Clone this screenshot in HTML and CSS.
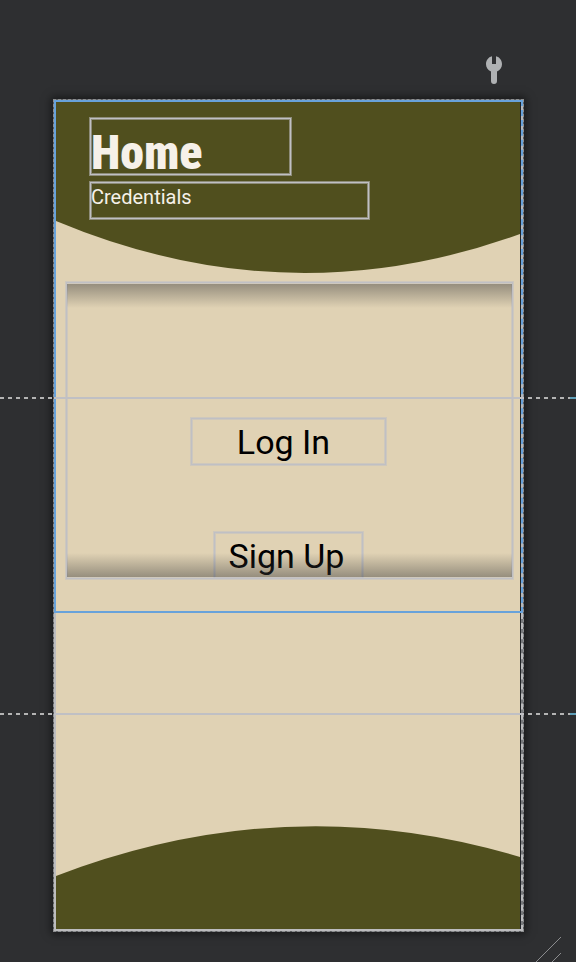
FILE: index.html
```html
<!DOCTYPE html>
<html lang="en">
<head>
<meta charset="utf-8">
<meta name="viewport" content="width=device-width, initial-scale=1">
<title>Home</title>
<link rel="stylesheet" href="styles.css">
</head>
<body>
<div class="toolbar">
  <button class="tool" type="button" aria-label="Design tools">
    <svg width="18" height="28" viewBox="0 0 18 28"><path fill="#afb1b3" d="M7 .2V8h4V.2C14.800 1 17 4.400 17 8.200c0 3.200-1.800 5.800-5 7.200v9.600a3 3 0 0 1-6 0v-9.600C2.800 14 1 11.400 1 8.200 1 4.400 3.200 1 7 .2z"/></svg>
  </button>
</div>
<main class="device">
  <section class="pane selected">
    <div class="screen">
      <header class="hero">
        <svg class="curve" viewBox="0 0 464 171" preserveAspectRatio="none"><path fill="#504f1e" d="M0 0H464V132Q232 216 0 119Z"/></svg>
        <h1 class="frame title">Home</h1>
        <p class="frame subtitle">Credentials</p>
      </header>
      <div class="frame panel">
        <button class="frame action login" type="button">Log In</button>
        <button class="frame action signup" type="button">Sign Up</button>
      </div>
    </div>
  </section>
  <section class="pane rest">
    <div class="screen bottom">
      <svg class="wave" viewBox="0 0 464 103" preserveAspectRatio="none"><path fill="#504f1e" d="M0 103V50Q232 -39 464 31V103Z"/></svg>
    </div>
  </section>
</main>
<div class="guide guide-upper"></div>
<div class="guide guide-lower"></div>
<svg class="grip" width="26" height="26" viewBox="0 0 26 26"><path d="M0 26 25 1M16 26l9-9" stroke="#8b8c8e" fill="none"/></svg>
</body>
</html>
```
FILE: styles.css
```css
* { box-sizing: border-box; }

body {
  position: relative;
  margin: 0;
  min-height: 100vh;
  background: #2e2f31;
  font-family: Roboto, "Liberation Sans", sans-serif;
  overflow-x: hidden;
}

.toolbar {
  display: flex;
  justify-content: flex-end;
  height: 99px;
  padding: 56px 73px 0 0;
}

.tool {
  width: 18px;
  height: 28px;
  padding: 0;
  border: 0;
  background: none;
}

.tool svg { display: block; }

.device {
  margin: 0 52px 0 53px;
  border: 1px dashed #8c8e90;
  background: #5a5c5e;
  box-shadow: 0 0 8px 2px rgba(0, 0, 0, .5);
}

.pane {
  border: 2px solid #bcbcbe;
  border-right-style: dashed;
  background: #77797c;
}

.selected {
  border-color: #68a2da;
  background: #b5b8bc;
}

.rest { border-top: 0; }

.screen {
  border-right: 1px solid #202225;
  background: #e0d2b4;
}

.selected .screen { padding-bottom: 32px; }

.hero {
  position: relative;
  height: 171px;
  padding: 16px 34px 0;
}

.curve {
  position: absolute;
  inset: 0;
  width: 100%;
  height: 100%;
}

.frame {
  position: relative;
  margin: 0;
  border: 1px solid #c0c0c4;
  box-shadow: 0 0 0 1px rgba(192, 192, 196, .55), inset 0 0 0 1px rgba(192, 192, 196, .55);
}

.title {
  width: 201px;
  height: 57px;
  color: #f6f1e9;
  font-family: "Roboto Condensed", Roboto, sans-serif;
  font-size: 48px;
  font-weight: 900;
  line-height: 68px;
}

.subtitle {
  width: 279px;
  height: 37px;
  margin-top: 7px;
  color: #f6f1e9;
  font-size: 20px;
  line-height: 28px;
}

.panel {
  display: flex;
  flex-direction: column;
  align-items: center;
  gap: 67px;
  margin: 9px 7px 0 10px;
  padding: 135px 2px 0 0;
}

.panel::before,
.panel::after {
  content: "";
  position: absolute;
  right: 0;
  left: 0;
  height: 24px;
  pointer-events: none;
}

.panel::before {
  top: 1px;
  background: linear-gradient(rgba(60, 60, 60, .45), rgba(60, 60, 60, 0));
}

.panel::after {
  bottom: 1px;
  background: linear-gradient(rgba(60, 60, 60, 0), rgba(60, 60, 60, .45));
}

.action {
  height: 47px;
  background: transparent;
  color: #000;
  font-family: inherit;
  font-size: 34px;
  line-height: 40px;
}

.login {
  width: 195px;
  padding: 0 10px 0 0;
}

.signup {
  width: 149px;
  height: 46px;
  padding: 0 4px 0 0;
  border-bottom: 0;
}

.bottom { padding-top: 213px; }

.wave {
  display: block;
  width: 100%;
  height: 103px;
}

.guide {
  position: absolute;
  right: 0;
  left: 0;
  height: 2px;
  background:
    linear-gradient(#c0c0c4, #c0c0c4) 54px 0 / calc(100% - 106px) 100% no-repeat,
    linear-gradient(#5f9fb8, #5f9fb8) 100% 0 / 6px 100% no-repeat,
    repeating-linear-gradient(90deg, #b4b4b4 0 4px, transparent 4px 8px);
}

.guide-upper { top: 397px; }
.guide-lower { top: 713px; }

.grip {
  position: absolute;
  right: 14px;
  bottom: 0;
}
```
